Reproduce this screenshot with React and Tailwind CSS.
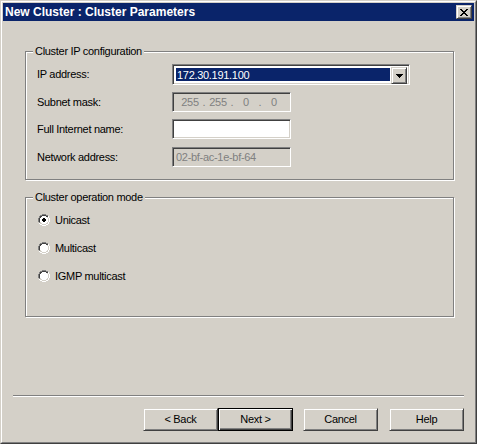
import React, { useState } from "react";

const sunken =
  "border border-t-[#808080] border-l-[#808080] border-r-white border-b-white shadow-[inset_1px_1px_0_#404040,inset_-1px_-1px_0_#d4d0c8]";
const raised =
  "border border-t-[#d4d0c8] border-l-[#d4d0c8] border-r-[#404040] border-b-[#404040] shadow-[inset_1px_1px_0_#ffffff,inset_-1px_-1px_0_#808080]";
const etched =
  "border border-[#808080] shadow-[inset_1px_1px_0_#ffffff,1px_1px_0_#ffffff]";

const Radio = ({ checked }) => (
  <svg width="12" height="12" viewBox="0 0 12 12" className="shrink-0">
    <path d="M4 0h4v1H4zM2 1h2v1H2zM8 1h2v1H8zM1 2h1v2H1zM0 4h1v4H0zM1 8h1v1H1z" fill="#808080" />
    <path d="M4 1h4v1H4zM2 2h2v1H2zM8 2h2v1H8zM1 4h1v4H1zM2 3h1v1H2z" fill="#404040" />
    <path d="M10 2h1v2h-1zM11 4h1v4h-1zM10 8h1v2h-1zM8 10h2v1H8zM2 10h2v1H2zM4 11h4v1H4zM1 9h1v1H1z" fill="#ffffff" />
    <path d="M10 4h1v4h-1zM9 8h1v2H9zM8 9h1v1H8zM4 10h4v1H4zM2 9h2v1H2z" fill="#d4d0c8" />
    <path d="M4 2h4v1H4zM3 3h6v1H3zM2 4h8v4H2zM3 8h6v1H3zM4 9h4v1H4z" fill="#ffffff" />
    {checked && <path d="M5 4h2v1H5zM4 5h4v2H4zM5 7h2v1H5z" fill="#000000" />}
  </svg>
);

const Group = ({ title, className, children }) => (
  <div className={`${etched} flex flex-col ${className}`}>
    <div className="-mt-[7px] ml-[7px] w-fit bg-[#d4d0c8] px-[2px] leading-[13px]">{title}</div>
    {children}
  </div>
);

const Row = ({ label, className, children }) => (
  <div className={`flex items-center ${className}`}>
    <div className="ml-[11px] w-[135px] leading-[13px]">{label}</div>
    {children}
  </div>
);

export default function App() {
  const [mode, setMode] = useState("unicast");
  const modes = [
    ["unicast", "Unicast"],
    ["multicast", "Multicast"],
    ["igmp", "IGMP multicast"],
  ];

  return (
    <div
      className="w-[477px] h-[444px] bg-[#d4d0c8] text-[11px] tracking-[-0.3px] text-black border border-t-[#d4d0c8] border-l-[#d4d0c8] border-r-[#404040] border-b-[#404040]"
      style={{ fontFamily: '"Liberation Sans", Arial, sans-serif' }}
    >
      <div className="h-full border border-t-white border-l-white border-r-[#808080] border-b-[#808080] p-px flex flex-col">
        {/* title bar */}
        <div className="h-[18px] bg-[#0a246a] flex items-center pl-[2px] pr-[2px]">
          <span className="text-white font-bold text-[12px] tracking-[0px] leading-[14px]">
            New Cluster : Cluster Parameters
          </span>
          <div className={`ml-auto w-[16px] h-[14px] bg-[#d4d0c8] ${raised} flex items-center justify-center`}>
            <svg width="8" height="7" viewBox="0 0 8 7">
              <path d="M0 0h2v1H0zM6 0h2v1H6zM1 1h2v1H1zM5 1h2v1H5zM2 2h4v1H2zM3 3h2v1H3zM2 4h4v1H2zM1 5h2v1H1zM5 5h2v1H5zM0 6h2v1H0zM6 6h2v1H6z" fill="#000" />
            </svg>
          </div>
        </div>

        {/* cluster IP configuration */}
        <Group title="Cluster IP configuration" className="mt-[30px] ml-[22px] mr-[20px] h-[129px]">
          <Row label="IP address:" className="mt-[6px]">
            <div className={`w-[238px] h-[21px] bg-white ${sunken} p-[2px] flex`}>
              <div className="flex-1 p-px">
                <div className="h-full bg-[#0a246a] text-white leading-[15px] pl-px">172.30.191.100</div>
              </div>
              <div className={`w-[16px] h-[17px] bg-[#d4d0c8] ${raised} flex items-center justify-center`}>
                <svg width="7" height="4" viewBox="0 0 7 4">
                  <path d="M0 0h7v1H0zM1 1h5v1H1zM2 2h3v1H2zM3 3h1v1H3z" fill="#000" />
                </svg>
              </div>
            </div>
          </Row>
          <Row label="Subnet mask:" className="mt-[7px]">
            <div className={`w-[119px] h-[20px] ${sunken} flex items-center pl-[6px] text-[#808080]`}>
              <span className="w-[22px] text-center">255</span>
              <span className="w-[6px] text-center">.</span>
              <span className="w-[22px] text-center">255</span>
              <span className="w-[6px] text-center">.</span>
              <span className="w-[22px] text-center">0</span>
              <span className="w-[6px] text-center">.</span>
              <span className="w-[22px] text-center">0</span>
            </div>
          </Row>
          <Row label="Full Internet name:" className="mt-[7px]">
            <div className={`w-[119px] h-[20px] bg-white ${sunken}`} />
          </Row>
          <Row label="Network address:" className="mt-[8px]">
            <div className={`w-[119px] h-[20px] ${sunken} flex items-center pl-[3px] text-[#808080]`}>
              02-bf-ac-1e-bf-64
            </div>
          </Row>
        </Group>

        {/* cluster operation mode */}
        <Group title="Cluster operation mode" className="mt-[17px] ml-[22px] mr-[20px] h-[120px]">
          <div className="mt-[9px] flex flex-col gap-[14px]">
            {modes.map(([key, label]) => (
              <label
                key={key}
                className="ml-[12px] h-[14px] flex items-center gap-[5px] leading-[13px] cursor-default"
                onClick={() => setMode(key)}
              >
                <Radio checked={mode === key} />
                <span>{label}</span>
              </label>
            ))}
          </div>
        </Group>

        {/* separator */}
        <div className="mt-[78px] mx-[10px] h-[2px] border-t border-t-[#808080] border-b border-b-white" />

        {/* buttons */}
        <div className="mt-[11px] mr-[10px] flex justify-end">
          <button className={`w-[75px] h-[23px] bg-[#d4d0c8] ${raised} leading-[13px]`}>&lt; Back</button>
          <button className="w-[75px] h-[23px] bg-[#d4d0c8] border border-black shadow-[inset_1px_1px_0_#ffffff,inset_-1px_-1px_0_#404040,inset_-2px_-2px_0_#808080] leading-[13px]">
            Next &gt;
          </button>
          <button className={`ml-[10px] w-[75px] h-[23px] bg-[#d4d0c8] ${raised} leading-[13px]`}>Cancel</button>
          <button className={`ml-[11px] w-[75px] h-[23px] bg-[#d4d0c8] ${raised} leading-[13px]`}>Help</button>
        </div>
      </div>
    </div>
  );
}
